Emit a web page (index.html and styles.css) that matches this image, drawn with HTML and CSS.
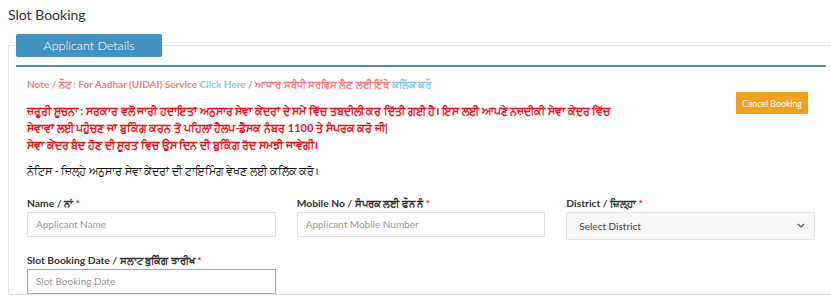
FILE: index.html
```html
<!DOCTYPE html>
<html lang="pa">
<head>
<meta charset="utf-8">
<title>Slot Booking</title>
<link rel="stylesheet" href="styles.css">
</head>
<body>
<div class="page">
  <h1 class="title">Slot Booking</h1>
  <div class="panel">
    <div class="tab">Applicant Details</div>
    <div class="rule"></div>
    <div class="content">
      <p class="note"><span class="pink">Note / ਨੋਟ : For Aadhar (UIDAI) Service </span><a class="blue">Click Here</a><span class="pink"> / ਆਧਾਰ ਸਬੰਧੀ ਸਰਵਿਸ ਲੈਣ ਲਈ ਇੱਥੇ </span><a class="blue">ਕਲਿੱਕ ਕਰੋ</a></p>
      <div class="notice-row">
        <p class="alert">ਜ਼ਰੂਰੀ ਸੂਚਨਾ : ਸਰਕਾਰ ਵਲੋਂ ਜਾਰੀ ਹਦਾਇਤਾਂ ਅਨੁਸਾਰ ਸੇਵਾ ਕੇਂਦਰਾਂ ਦੇ ਸਮੇਂ ਵਿੱਚ ਤਬਦੀਲੀ ਕਰ ਦਿੱਤੀ ਗਈ ਹੈ। ਇਸ ਲਈ ਆਪਣੇ ਨਜ਼ਦੀਕੀ ਸੇਵਾ ਕੇਂਦਰ ਵਿੱਚ<br>ਸੇਵਾਵਾਂ ਲਈ ਪਹੁੰਚਣ ਜਾਂ ਬੁਕਿੰਗ ਕਰਨ ਤੋਂ ਪਹਿਲਾਂ ਹੈਲਪ-ਡੈਸਕ ਨੰਬਰ 1100 ਤੇ ਸੰਪਰਕ ਕਰੋ ਜੀ|<br>ਸੇਵਾ ਕੇਂਦਰ ਬੰਦ ਹੋਣ ਦੀ ਸੂਰਤ ਵਿਚ ਉਸ ਦਿਨ ਦੀ ਬੁਕਿੰਗ ਰੱਦ ਸਮਝੀ ਜਾਵੇਗੀ।</p>
        <button class="cancel" type="button">Cancel Booking</button>
      </div>
      <p class="timing">ਨੋਟਿਸ - ਜ਼ਿਲ੍ਹੇ ਅਨੁਸਾਰ ਸੇਵਾ ਕੇਂਦਰਾਂ ਦੀ ਟਾਇਮਿੰਗ ਵੇਖਣ ਲਈ ਕਲਿੱਕ ਕਰੋ।</p>
      <div class="form-grid">
        <div class="field">
          <label class="label">Name / ਨਾਂ <span class="req">*</span></label>
          <input class="input" type="text" placeholder="Applicant Name">
        </div>
        <div class="field">
          <label class="label">Mobile No / ਸੰਪਰਕ ਲਈ ਫੋਨ ਨੰ <span class="req">*</span></label>
          <input class="input" type="text" placeholder="Applicant Mobile Number">
        </div>
        <div class="field">
          <label class="label">District / ਜ਼ਿਲ੍ਹਾ <span class="req">*</span></label>
          <div class="select">
            <span>Select District</span>
            <svg class="chev" width="8" height="5" viewBox="0 0 8 5"><path d="M1 1 L4 4 L7 1" fill="none" stroke="#555" stroke-width="1.2"/></svg>
          </div>
        </div>
        <div class="field">
          <label class="label">Slot Booking Date / ਸਲਾਟ ਬੁਕਿੰਗ ਤਾਰੀਖ <span class="req">*</span></label>
          <input class="input dark" type="text" placeholder="Slot Booking Date">
        </div>
      </div>
    </div>
  </div>
</div>
</body>
</html>
```
FILE: styles.css
```css
html, body {
  margin: 0;
  padding: 0;
  background: #fff;
  overflow: hidden;
}
body {
  font-family: "Lato", "Noto Sans", sans-serif;
  color: #333;
}
.page {
  padding: 5px 0 0 8px;
}
.title {
  margin: 0;
  font-size: 14px;
  font-weight: 400;
  line-height: 20px;
  color: #333;
}
.panel {
  margin-top: 20px;
  margin-right: -20px;
  border: 1px solid #e4e4e4;
  padding: 0 0 0 7px;
}
.tab {
  width: 146px;
  height: 23px;
  margin-top: -12px;
  background: #4191c3;
  color: #fff;
  font-size: 12.5px;
  line-height: 23px;
  text-align: center;
  border-radius: 2px;
  font-weight: 300;
}
.rule {
  margin-top: 8px;
  width: 810px;
  height: 2px;
  background: #5b8fa9;
}
.content {
  padding: 0 0 0 11px;
  width: 788px;
}
.note {
  margin: 10px 0 0;
  font-size: 10px;
  font-weight: 700;
  line-height: 14px;
}
.pink { color: #f37f80; }
.blue { color: #8ec6e2; }
.notice-row {
  display: flex;
  justify-content: space-between;
  align-items: flex-start;
  margin-top: 1px;
}
.alert {
  margin: 10px 0 0;
  color: #e8161b;
  font-size: 11px;
  font-weight: 700;
  line-height: 17px;
}
.cancel {
  margin: 0 7px 0 0;
  width: 72px;
  height: 22px;
  flex: none;
  background: #f1a01f;
  border: none;
  color: #fff;
  font-family: inherit;
  font-size: 8.8px;
  padding: 0;
  border-radius: 1px;
}
.timing {
  margin: 10px 0 0;
  color: #111;
  font-size: 10.5px;
  line-height: 17px;
}
.form-grid {
  display: grid;
  grid-template-columns: repeat(3, 1fr);
  column-gap: 21px;
  row-gap: 13px;
  margin-top: 15.5px;
}
.field {
  display: flex;
  flex-direction: column;
}
.label {
  font-size: 10.3px;
  font-weight: 700;
  line-height: 14px;
  color: #333;
  margin-bottom: 2px;
}
.req { color: #e8161b; }
.input {
  box-sizing: border-box;
  height: 25px;
  border: 1px solid #e2e2e2;
  padding: 0 8px;
  font-family: inherit;
  font-size: 10px;
  color: #333;
  margin: 0;
  outline: none;
}
.input::placeholder { color: #999; }
.input.dark { border-color: #a9a9a9; }
.select {
  box-sizing: border-box;
  height: 28px;
  border: 1px solid #e6e6e6;
  background: #f7f7f7;
  display: flex;
  align-items: center;
  justify-content: space-between;
  padding: 0 9px 0 12px;
  font-size: 10px;
  color: #444;
}
```
